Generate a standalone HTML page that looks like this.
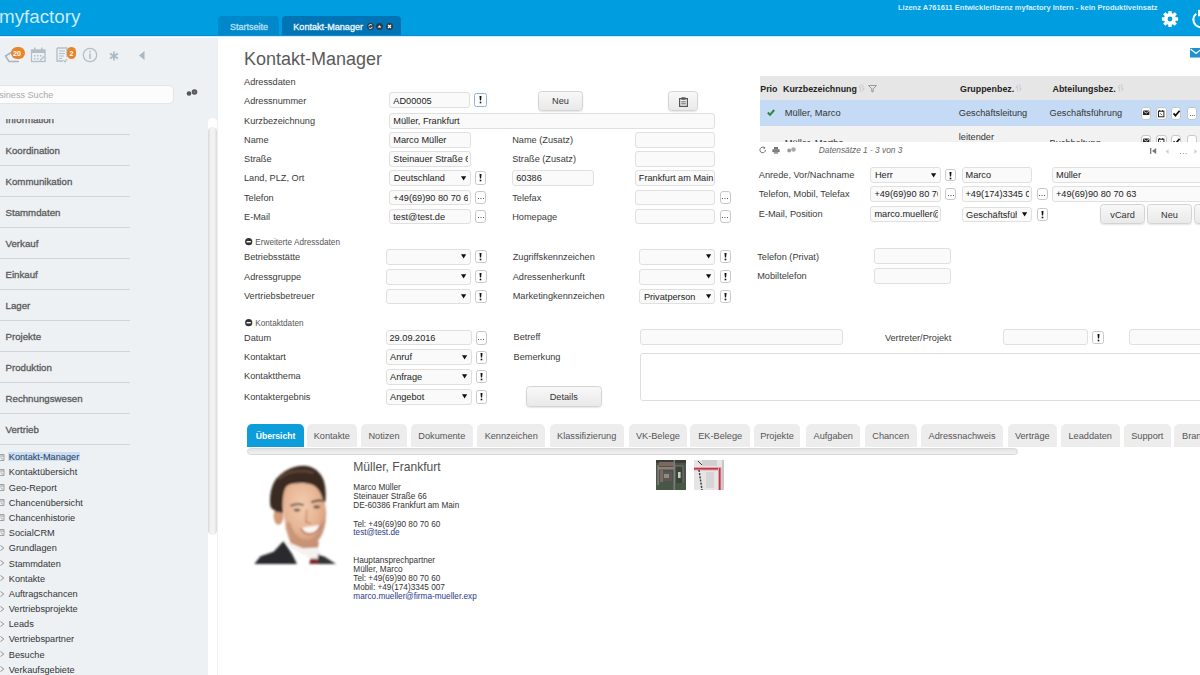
<!DOCTYPE html>
<html><head><meta charset="utf-8"><style>
html,body{margin:0;padding:0;}
body{width:1200px;height:675px;overflow:hidden;position:relative;background:#fff;font-family:"Liberation Sans",sans-serif;}
.t{position:absolute;line-height:0;white-space:nowrap;}
.b{position:absolute;}
svg.b{overflow:visible;}
</style></head><body>
<div class="b" style="left:0.00px;top:0.00px;width:1200.00px;height:36.00px;background:#009de0;"></div>
<div class="b" style="left:0.00px;top:35.00px;width:1200.00px;height:1.00px;background:#0a8dca;"></div>
<div class="b" style="left:0.00px;top:36.00px;width:1200.00px;height:1.00px;background:#c6f1fc;"></div>
<div class="t" style="left:-1.00px;top:17.29px;font-size:18.8px;color:rgba(235,248,255,0.88);">myfactory</div>
<div class="t" style="left:898.00px;top:7.50px;font-size:7.5px;color:#d7f0fc;font-weight:bold;">Lizenz A761611 Entwicklerlizenz myfactory Intern - kein Produktiveinsatz</div>
<div class="b" style="left:218.00px;top:16.00px;width:61.00px;height:19.00px;background:#0088ca;border-radius:4px 4px 0 0;"></div>
<div class="t" style="left:229.90px;top:27.08px;font-size:9.0px;color:#b5e2f8;-webkit-text-stroke:0.3px #b5e2f8;">Startseite</div>
<div class="b" style="left:282.00px;top:16.00px;width:119.00px;height:19.00px;background:#0074b5;border-radius:4px 4px 0 0;"></div>
<div class="t" style="left:293.30px;top:27.05px;font-size:9.1px;color:#eef9ff;-webkit-text-stroke:0.3px #eef9ff;">Kontakt-Manager</div>
<svg class="b" style="left:366.5px;top:22.5px" width="7" height="7"><circle cx="3.5" cy="3.5" r="3.4" fill="#2a3a48"/><path d="M1.8 3.2a1.8 1.8 0 0 1 3.3-0.8M5.2 3.8a1.8 1.8 0 0 1-3.3 0.8" stroke="#fff" stroke-width="1" fill="none"/></svg>
<svg class="b" style="left:375.7px;top:22.5px" width="7" height="7"><circle cx="3.5" cy="3.5" r="3.4" fill="#2a3a48"/><path d="M1.6 4.6L3.5 2.2L5.4 4.6Z" fill="#fff"/></svg>
<svg class="b" style="left:385.6px;top:22.5px" width="7" height="7"><circle cx="3.5" cy="3.5" r="3.4" fill="#2a3a48"/><path d="M2 2L5 5M5 2L2 5" stroke="#fff" stroke-width="1.2"/></svg>
<svg class="b" style="left:1161px;top:10.2px" width="18" height="18" viewBox="0 0 18 18"><g fill="#fff"><rect x="7.3" y="0.9" width="3.4" height="4" rx="0.5" transform="rotate(0 9 9)"/><rect x="7.3" y="0.9" width="3.4" height="4" rx="0.5" transform="rotate(45 9 9)"/><rect x="7.3" y="0.9" width="3.4" height="4" rx="0.5" transform="rotate(90 9 9)"/><rect x="7.3" y="0.9" width="3.4" height="4" rx="0.5" transform="rotate(135 9 9)"/><rect x="7.3" y="0.9" width="3.4" height="4" rx="0.5" transform="rotate(180 9 9)"/><rect x="7.3" y="0.9" width="3.4" height="4" rx="0.5" transform="rotate(225 9 9)"/><rect x="7.3" y="0.9" width="3.4" height="4" rx="0.5" transform="rotate(270 9 9)"/><rect x="7.3" y="0.9" width="3.4" height="4" rx="0.5" transform="rotate(315 9 9)"/><circle cx="9" cy="9" r="6"/></g><circle cx="9" cy="9" r="2.4" fill="#009de0"/></svg>
<svg class="b" style="left:1190.5px;top:9px" width="20" height="20" viewBox="0 0 20 20"><path d="M5.2 4.8A7.6 7.6 0 1 0 14.8 4.8" stroke="#fff" stroke-width="2.1" fill="none"/><rect x="7" y="0.8" width="5" height="6.5" fill="#fff"/></svg>
<div class="b" style="left:0.00px;top:37.50px;width:218.00px;height:637.50px;background:#edf1f4;"></div>
<svg class="b" style="left:4px;top:46px" width="20" height="18"><path d="M12 3.5L1.5 10L5 15.5H15" stroke="#a9b6c0" stroke-width="1.6" fill="none"/></svg>
<div class="b" style="left:10.5px;top:47.2px;width:14.2px;height:11.8px;border-radius:6px;background:#e8842a;"></div>
<div class="t" style="left:12.90px;top:54.21px;font-size:7.2px;color:#fff;font-weight:bold;">20</div>
<svg class="b" style="left:30px;top:47px" width="17" height="16" viewBox="0 0 17 16"><rect x="1.5" y="3" width="13.5" height="11.5" fill="none" stroke="#b3bec6" stroke-width="1.3"/><rect x="1.5" y="3" width="13.5" height="3" fill="#b3bec6"/><rect x="4" y="0.5" width="1.5" height="3.5" fill="#b3bec6"/><rect x="11" y="0.5" width="1.5" height="3.5" fill="#b3bec6"/><g fill="#b3bec6"><rect x="4" y="8" width="1.5" height="1.5"/><rect x="7" y="8" width="1.5" height="1.5"/><rect x="10" y="8" width="1.5" height="1.5"/><rect x="4" y="11" width="1.5" height="1.5"/><rect x="7" y="11" width="1.5" height="1.5"/></g><path d="M10 13.5L14 9.5" stroke="#b3bec6" stroke-width="1.3"/></svg>
<svg class="b" style="left:56px;top:47px" width="14" height="16" viewBox="0 0 14 16"><path d="M1 1H11V10M1 1V14H7" fill="none" stroke="#b3bec6" stroke-width="1.3"/><g stroke="#b3bec6" stroke-width="1.1"><path d="M3 4H9M3 6.5H9M3 9H8M3 11.5H6"/></g><path d="M7.5 13L9 15L11 12" stroke="#b3bec6" stroke-width="1.2" fill="none"/></svg>
<div class="b" style="left:66.5px;top:47.2px;width:9.8px;height:11.8px;border-radius:5px;background:#e8842a;"></div>
<div class="t" style="left:69.40px;top:54.21px;font-size:7.2px;color:#fff;font-weight:bold;">2</div>
<svg class="b" style="left:82px;top:47px" width="16" height="16" viewBox="0 0 16 16"><circle cx="8" cy="8" r="6.7" fill="none" stroke="#b3bec6" stroke-width="1.3"/><rect x="7.2" y="6.5" width="1.6" height="5.5" fill="#b3bec6"/><rect x="7.2" y="3.8" width="1.6" height="1.6" fill="#b3bec6"/></svg>
<svg class="b" style="left:109px;top:51px" width="10" height="10" viewBox="0 0 10 10"><g stroke="#a9b8c2" stroke-width="1.6"><path d="M5 0.5V9.5M1 2.5L9 7.5M9 2.5L1 7.5"/></g></svg>
<svg class="b" style="left:139px;top:51px" width="6" height="9"><path d="M5.5 0L0 4.5L5.5 9Z" fill="#a9b8c2"/></svg>
<div class="b" style="left:-5.00px;top:85.00px;width:179.00px;height:19.30px;background:#fcfcfc;border:1px solid #e3e6e8;border-radius:5px;box-sizing:border-box;"></div>
<div class="t" style="left:-11.90px;top:95.15px;font-size:9.1px;color:#aaaaaa;">Business Suche</div>
<svg class="b" style="left:186px;top:88px" width="13" height="9"><circle cx="3" cy="5.5" r="2.3" fill="#555"/><circle cx="8.5" cy="4" r="2.8" fill="#555"/><circle cx="8.5" cy="4" r="1.2" fill="#777"/></svg>
<div class="b" style="left:0;top:117.5px;width:206px;height:557.5px;overflow:hidden;">
<div class="t" style="left:5.50px;top:2.34px;font-size:9.7px;color:#5a5a5a;-webkit-text-stroke:0.3px #5a5a5a;">Information</div>
<div class="b" style="left:0.00px;top:16.50px;width:130.00px;height:1.00px;background:#cfd5d9;"></div>
<div class="t" style="left:5.50px;top:33.34px;font-size:9.7px;color:#5a5a5a;-webkit-text-stroke:0.3px #5a5a5a;">Koordination</div>
<div class="b" style="left:0.00px;top:47.50px;width:130.00px;height:1.00px;background:#cfd5d9;"></div>
<div class="t" style="left:5.50px;top:64.34px;font-size:9.7px;color:#5a5a5a;-webkit-text-stroke:0.3px #5a5a5a;">Kommunikation</div>
<div class="b" style="left:0.00px;top:78.50px;width:130.00px;height:1.00px;background:#cfd5d9;"></div>
<div class="t" style="left:5.50px;top:95.34px;font-size:9.7px;color:#5a5a5a;-webkit-text-stroke:0.3px #5a5a5a;">Stammdaten</div>
<div class="b" style="left:0.00px;top:109.50px;width:130.00px;height:1.00px;background:#cfd5d9;"></div>
<div class="t" style="left:5.50px;top:126.34px;font-size:9.7px;color:#5a5a5a;-webkit-text-stroke:0.3px #5a5a5a;">Verkauf</div>
<div class="b" style="left:0.00px;top:140.50px;width:130.00px;height:1.00px;background:#cfd5d9;"></div>
<div class="t" style="left:5.50px;top:157.34px;font-size:9.7px;color:#5a5a5a;-webkit-text-stroke:0.3px #5a5a5a;">Einkauf</div>
<div class="b" style="left:0.00px;top:171.50px;width:130.00px;height:1.00px;background:#cfd5d9;"></div>
<div class="t" style="left:5.50px;top:188.34px;font-size:9.7px;color:#5a5a5a;-webkit-text-stroke:0.3px #5a5a5a;">Lager</div>
<div class="b" style="left:0.00px;top:202.50px;width:130.00px;height:1.00px;background:#cfd5d9;"></div>
<div class="t" style="left:5.50px;top:219.34px;font-size:9.7px;color:#5a5a5a;-webkit-text-stroke:0.3px #5a5a5a;">Projekte</div>
<div class="b" style="left:0.00px;top:233.50px;width:130.00px;height:1.00px;background:#cfd5d9;"></div>
<div class="t" style="left:5.50px;top:250.34px;font-size:9.7px;color:#5a5a5a;-webkit-text-stroke:0.3px #5a5a5a;">Produktion</div>
<div class="b" style="left:0.00px;top:264.50px;width:130.00px;height:1.00px;background:#cfd5d9;"></div>
<div class="t" style="left:5.50px;top:281.34px;font-size:9.7px;color:#5a5a5a;-webkit-text-stroke:0.3px #5a5a5a;">Rechnungswesen</div>
<div class="b" style="left:0.00px;top:295.50px;width:130.00px;height:1.00px;background:#cfd5d9;"></div>
<div class="t" style="left:5.50px;top:312.34px;font-size:9.7px;color:#5a5a5a;-webkit-text-stroke:0.3px #5a5a5a;">Vertrieb</div>
<div class="b" style="left:0.00px;top:326.50px;width:130.00px;height:1.00px;background:#cfd5d9;"></div>
<div class="b" style="left:8.30px;top:334.20px;width:71.50px;height:9.70px;background:#c9ddf3;"></div>
<div class="t" style="left:8.75px;top:339.81px;font-size:9.2px;color:#2b3a55;">Kontakt-Manager</div>
<svg class="b" style="left:-1px;top:336.00px" width="6" height="7"><path d="M0 0.5H5V6.5H0" fill="none" stroke="#999" stroke-width="0.9"/><path d="M0 2H5" stroke="#999" stroke-width="0.9"/><path d="M2 3.5L3.8 5.5" stroke="#888" stroke-width="0.9"/></svg>
<div class="t" style="left:8.75px;top:354.98px;font-size:9.2px;color:#333;">Kontaktübersicht</div>
<svg class="b" style="left:-1px;top:351.17px" width="6" height="7"><path d="M0 0.5H5V6.5H0" fill="none" stroke="#999" stroke-width="0.9"/><path d="M0 2H5" stroke="#999" stroke-width="0.9"/><path d="M2 3.5L3.8 5.5" stroke="#888" stroke-width="0.9"/></svg>
<div class="t" style="left:8.75px;top:370.15px;font-size:9.2px;color:#333;">Geo-Report</div>
<svg class="b" style="left:-1px;top:366.34px" width="6" height="7"><path d="M0 0.5H5V6.5H0" fill="none" stroke="#999" stroke-width="0.9"/><path d="M0 2H5" stroke="#999" stroke-width="0.9"/><path d="M2 3.5L3.8 5.5" stroke="#888" stroke-width="0.9"/></svg>
<div class="t" style="left:8.75px;top:385.32px;font-size:9.2px;color:#333;">Chancenübersicht</div>
<svg class="b" style="left:-1px;top:381.51px" width="6" height="7"><path d="M0 0.5H5V6.5H0" fill="none" stroke="#999" stroke-width="0.9"/><path d="M0 2H5" stroke="#999" stroke-width="0.9"/><path d="M2 3.5L3.8 5.5" stroke="#888" stroke-width="0.9"/></svg>
<div class="t" style="left:8.75px;top:400.49px;font-size:9.2px;color:#333;">Chancenhistorie</div>
<svg class="b" style="left:-1px;top:396.68px" width="6" height="7"><path d="M0 0.5H5V6.5H0" fill="none" stroke="#999" stroke-width="0.9"/><path d="M0 2H5" stroke="#999" stroke-width="0.9"/><path d="M2 3.5L3.8 5.5" stroke="#888" stroke-width="0.9"/></svg>
<div class="t" style="left:8.75px;top:415.66px;font-size:9.2px;color:#333;">SocialCRM</div>
<svg class="b" style="left:-1px;top:411.85px" width="6" height="7"><path d="M0 0.5H5V6.5H0" fill="none" stroke="#999" stroke-width="0.9"/><path d="M0 2H5" stroke="#999" stroke-width="0.9"/><path d="M2 3.5L3.8 5.5" stroke="#888" stroke-width="0.9"/></svg>
<div class="t" style="left:8.75px;top:430.83px;font-size:9.2px;color:#333;">Grundlagen</div>
<svg class="b" style="left:-0.5px;top:427.52px" width="5" height="6"><path d="M0.5 0.5L3.8 3L0.5 5.5" fill="none" stroke="#888" stroke-width="0.9"/></svg>
<div class="t" style="left:8.75px;top:446.00px;font-size:9.2px;color:#333;">Stammdaten</div>
<svg class="b" style="left:-0.5px;top:442.69px" width="5" height="6"><path d="M0.5 0.5L3.8 3L0.5 5.5" fill="none" stroke="#888" stroke-width="0.9"/></svg>
<div class="t" style="left:8.75px;top:461.17px;font-size:9.2px;color:#333;">Kontakte</div>
<svg class="b" style="left:-0.5px;top:457.86px" width="5" height="6"><path d="M0.5 0.5L3.8 3L0.5 5.5" fill="none" stroke="#888" stroke-width="0.9"/></svg>
<div class="t" style="left:8.75px;top:476.34px;font-size:9.2px;color:#333;">Auftragschancen</div>
<svg class="b" style="left:-0.5px;top:473.03px" width="5" height="6"><path d="M0.5 0.5L3.8 3L0.5 5.5" fill="none" stroke="#888" stroke-width="0.9"/></svg>
<div class="t" style="left:8.75px;top:491.51px;font-size:9.2px;color:#333;">Vertriebsprojekte</div>
<svg class="b" style="left:-0.5px;top:488.20px" width="5" height="6"><path d="M0.5 0.5L3.8 3L0.5 5.5" fill="none" stroke="#888" stroke-width="0.9"/></svg>
<div class="t" style="left:8.75px;top:506.68px;font-size:9.2px;color:#333;">Leads</div>
<svg class="b" style="left:-0.5px;top:503.37px" width="5" height="6"><path d="M0.5 0.5L3.8 3L0.5 5.5" fill="none" stroke="#888" stroke-width="0.9"/></svg>
<div class="t" style="left:8.75px;top:521.85px;font-size:9.2px;color:#333;">Vertriebspartner</div>
<svg class="b" style="left:-0.5px;top:518.54px" width="5" height="6"><path d="M0.5 0.5L3.8 3L0.5 5.5" fill="none" stroke="#888" stroke-width="0.9"/></svg>
<div class="t" style="left:8.75px;top:537.02px;font-size:9.2px;color:#333;">Besuche</div>
<svg class="b" style="left:-0.5px;top:533.71px" width="5" height="6"><path d="M0.5 0.5L3.8 3L0.5 5.5" fill="none" stroke="#888" stroke-width="0.9"/></svg>
<div class="t" style="left:8.75px;top:552.19px;font-size:9.2px;color:#333;">Verkaufsgebiete</div>
<svg class="b" style="left:-0.5px;top:548.88px" width="5" height="6"><path d="M0.5 0.5L3.8 3L0.5 5.5" fill="none" stroke="#888" stroke-width="0.9"/></svg>
</div>
<div class="b" style="left:0.00px;top:117.00px;width:206.00px;height:1.70px;background:#edf1f4;"></div>
<div class="b" style="left:207.50px;top:117.50px;width:9.20px;height:557.50px;background:#fff;border-radius:4.5px 4.5px 0 0;"></div>
<div class="b" style="left:207.50px;top:126.80px;width:9.20px;height:408.70px;background:linear-gradient(90deg,#d8d8d8,#f2f2f2 30%,#f2f2f2 70%,#d8d8d8);border-radius:4.6px;"></div>
<div class="t" style="left:244.00px;top:59.26px;font-size:18px;color:#5a5a5a;">Kontakt-Manager</div>
<svg class="b" style="left:1190px;top:47.5px" width="12" height="10"><rect x="0" y="0" width="12" height="9.5" fill="#1e8fd2"/><path d="M0.5 1L6 5.5L11.5 1" stroke="#fff" stroke-width="1.3" fill="none"/></svg>
<div class="t" style="left:244.00px;top:82.01px;font-size:9.2px;color:#3a3a3a;">Adressdaten</div>
<div class="t" style="left:244.00px;top:101.01px;font-size:9.2px;color:#3a3a3a;">Adressnummer</div>
<div class="t" style="left:244.00px;top:120.61px;font-size:9.2px;color:#3a3a3a;">Kurzbezeichnung</div>
<div class="t" style="left:244.00px;top:139.51px;font-size:9.2px;color:#3a3a3a;">Name</div>
<div class="t" style="left:244.00px;top:158.91px;font-size:9.2px;color:#3a3a3a;">Straße</div>
<div class="t" style="left:244.00px;top:178.41px;font-size:9.2px;color:#3a3a3a;">Land, PLZ, Ort</div>
<div class="t" style="left:244.00px;top:197.61px;font-size:9.2px;color:#3a3a3a;">Telefon</div>
<div class="t" style="left:244.00px;top:216.71px;font-size:9.2px;color:#3a3a3a;">E-Mail</div>
<div class="b" style="left:389.30px;top:92.30px;width:81.00px;height:16.20px;border:1px solid #e0e0e0;border-radius:3px;background:#fafafa;box-sizing:border-box;overflow:hidden;"></div>
<div class="b" style="left:390.30px;top:93.30px;width:77.00px;height:14.20px;overflow:hidden;"><div class="t" style="left:3.00px;top:7.22px;font-size:9.2px;color:#222;white-space:nowrap">AD00005</div></div>
<div class="b" style="left:474.20px;top:93.00px;width:12.40px;height:14.00px;border:1.5px solid #8fb0dc;border-radius:2.5px;background:#fff;box-sizing:border-box;"></div>
<svg class="b" style="left:478.90px;top:96.40px" width="3" height="7.5"><path d="M0.5 0H2.5L2.1 4.6H0.9Z" fill="#111"/><rect x="0.7" y="5.7" width="1.6" height="1.6" fill="#111"/></svg>
<div class="b" style="left:538.30px;top:90.50px;width:44.40px;height:20.30px;border:1px solid #d4d4d4;border-radius:3.5px;background:linear-gradient(#f8f8f8,#e9e9e9);box-sizing:border-box;box-shadow:0 1px 1.5px rgba(0,0,0,0.10);"></div>
<div class="b" style="left:538.30px;top:90.50px;width:44.40px;"><div class="t" style="position:relative;text-align:center;top:10.87px;font-size:9.2px;color:#333">Neu</div></div>
<div class="b" style="left:668.30px;top:90.50px;width:29.90px;height:20.30px;border:1px solid #d4d4d4;border-radius:3.5px;background:linear-gradient(#f8f8f8,#e9e9e9);box-sizing:border-box;box-shadow:0 1px 1.5px rgba(0,0,0,0.10);"><svg style="position:absolute;left:10px;top:5px" width="9" height="10"><rect x="0.6" y="1.6" width="7.8" height="7.8" fill="none" stroke="#555" stroke-width="1.2"/><rect x="2.5" y="0.3" width="4" height="2.5" fill="#555"/><path d="M2.2 4.8H6.8M2.2 6.8H6.8" stroke="#555" stroke-width="0.9"/></svg></div>
<div class="b" style="left:389.30px;top:113.20px;width:326.20px;height:15.60px;border:1px solid #e0e0e0;border-radius:3px;background:#fafafa;box-sizing:border-box;overflow:hidden;"></div>
<div class="b" style="left:390.30px;top:114.20px;width:322.20px;height:13.60px;overflow:hidden;"><div class="t" style="left:3.00px;top:6.92px;font-size:9.2px;color:#222;white-space:nowrap">Müller, Frankfurt</div></div>
<div class="b" style="left:389.30px;top:132.30px;width:81.40px;height:15.70px;border:1px solid #e0e0e0;border-radius:3px;background:#fafafa;box-sizing:border-box;overflow:hidden;"></div>
<div class="b" style="left:390.30px;top:133.30px;width:77.40px;height:13.70px;overflow:hidden;"><div class="t" style="left:3.00px;top:6.97px;font-size:9.2px;color:#222;white-space:nowrap">Marco Müller</div></div>
<div class="b" style="left:389.30px;top:151.20px;width:81.40px;height:15.80px;border:1px solid #e0e0e0;border-radius:3px;background:#fafafa;box-sizing:border-box;overflow:hidden;"></div>
<div class="b" style="left:390.30px;top:152.20px;width:77.40px;height:13.80px;overflow:hidden;"><div class="t" style="left:3.00px;top:7.02px;font-size:9.2px;color:#222;white-space:nowrap">Steinauer Straße 66</div></div>
<div class="b" style="left:389.30px;top:170.30px;width:81.40px;height:15.80px;border:1px solid #e0e0e0;border-radius:3px;background:#fafafa;box-sizing:border-box;"></div>
<div class="b" style="left:390.30px;top:171.30px;width:65.40px;height:13.80px;overflow:hidden;"><div class="t" style="left:3.5px;top:7.02px;font-size:9.2px;color:#222;white-space:nowrap">Deutschland</div></div>
<svg class="b" style="left:460.80px;top:175.90px" width="5.2" height="4.6"><path d="M0 0.2H5.2L2.6 4.4Z" fill="#111"/></svg>
<div class="b" style="left:474.80px;top:171.30px;width:11.70px;height:13.30px;border:1px solid #c8c8c8;border-radius:2.5px;background:#fff;box-sizing:border-box;"></div>
<svg class="b" style="left:479.15px;top:174.35px" width="3" height="7.5"><path d="M0.5 0H2.5L2.1 4.6H0.9Z" fill="#111"/><rect x="0.7" y="5.7" width="1.6" height="1.6" fill="#111"/></svg>
<div class="b" style="left:389.30px;top:189.70px;width:81.40px;height:15.60px;border:1px solid #e0e0e0;border-radius:3px;background:#fafafa;box-sizing:border-box;overflow:hidden;"></div>
<div class="b" style="left:390.30px;top:190.70px;width:77.40px;height:13.60px;overflow:hidden;"><div class="t" style="left:3.00px;top:6.92px;font-size:9.2px;color:#222;white-space:nowrap">+49(69)90 80 70 60</div></div>
<div class="b" style="left:474.80px;top:190.50px;width:11.70px;height:13.50px;border:1px solid #c8c8c8;border-radius:3px;background:#fff;box-sizing:border-box;"></div>
<svg class="b" style="left:477.65px;top:198.25px" width="6" height="2"><rect x="0" y="0" width="1" height="1" fill="#555"/><rect x="2.5" y="0" width="1" height="1" fill="#555"/><rect x="5" y="0" width="1" height="1" fill="#555"/></svg>
<div class="b" style="left:389.30px;top:208.60px;width:81.40px;height:15.80px;border:1px solid #e0e0e0;border-radius:3px;background:#fafafa;box-sizing:border-box;overflow:hidden;"></div>
<div class="b" style="left:390.30px;top:209.60px;width:77.40px;height:13.80px;overflow:hidden;"><div class="t" style="left:3.00px;top:7.02px;font-size:9.2px;color:#222;white-space:nowrap">test@test.de</div></div>
<div class="b" style="left:474.80px;top:209.50px;width:11.70px;height:13.50px;border:1px solid #c8c8c8;border-radius:3px;background:#fff;box-sizing:border-box;"></div>
<svg class="b" style="left:477.65px;top:217.25px" width="6" height="2"><rect x="0" y="0" width="1" height="1" fill="#555"/><rect x="2.5" y="0" width="1" height="1" fill="#555"/><rect x="5" y="0" width="1" height="1" fill="#555"/></svg>
<div class="t" style="left:512.20px;top:139.71px;font-size:9.2px;color:#3a3a3a;">Name (Zusatz)</div>
<div class="t" style="left:512.20px;top:159.11px;font-size:9.2px;color:#3a3a3a;">Straße (Zusatz)</div>
<div class="t" style="left:512.20px;top:197.61px;font-size:9.2px;color:#3a3a3a;">Telefax</div>
<div class="t" style="left:512.20px;top:216.71px;font-size:9.2px;color:#3a3a3a;">Homepage</div>
<div class="b" style="left:635.20px;top:132.30px;width:80.30px;height:15.70px;border:1px solid #e0e0e0;border-radius:3px;background:#fafafa;box-sizing:border-box;overflow:hidden;"></div>
<div class="b" style="left:635.20px;top:151.20px;width:80.30px;height:15.80px;border:1px solid #e0e0e0;border-radius:3px;background:#fafafa;box-sizing:border-box;overflow:hidden;"></div>
<div class="b" style="left:512.20px;top:170.30px;width:81.40px;height:15.80px;border:1px solid #e0e0e0;border-radius:3px;background:#fafafa;box-sizing:border-box;overflow:hidden;"></div>
<div class="b" style="left:513.20px;top:171.30px;width:77.40px;height:13.80px;overflow:hidden;"><div class="t" style="left:3.00px;top:7.02px;font-size:9.2px;color:#222;white-space:nowrap">60386</div></div>
<div class="b" style="left:635.20px;top:170.30px;width:80.30px;height:15.80px;border:1px solid #e0e0e0;border-radius:3px;background:#fafafa;box-sizing:border-box;overflow:hidden;"></div>
<div class="b" style="left:636.20px;top:171.30px;width:79.30px;height:13.80px;overflow:hidden;"><div class="t" style="left:2.60px;top:7.02px;font-size:9.2px;color:#222;white-space:nowrap">Frankfurt am Main</div></div>
<div class="b" style="left:635.20px;top:189.70px;width:80.30px;height:15.60px;border:1px solid #e0e0e0;border-radius:3px;background:#fafafa;box-sizing:border-box;overflow:hidden;"></div>
<div class="b" style="left:719.60px;top:190.50px;width:11.20px;height:13.50px;border:1px solid #c8c8c8;border-radius:3px;background:#fff;box-sizing:border-box;"></div>
<svg class="b" style="left:722.20px;top:198.25px" width="6" height="2"><rect x="0" y="0" width="1" height="1" fill="#555"/><rect x="2.5" y="0" width="1" height="1" fill="#555"/><rect x="5" y="0" width="1" height="1" fill="#555"/></svg>
<div class="b" style="left:635.20px;top:208.60px;width:80.30px;height:15.80px;border:1px solid #e0e0e0;border-radius:3px;background:#fafafa;box-sizing:border-box;overflow:hidden;"></div>
<div class="b" style="left:719.60px;top:209.50px;width:11.20px;height:13.50px;border:1px solid #c8c8c8;border-radius:3px;background:#fff;box-sizing:border-box;"></div>
<svg class="b" style="left:722.20px;top:217.25px" width="6" height="2"><rect x="0" y="0" width="1" height="1" fill="#555"/><rect x="2.5" y="0" width="1" height="1" fill="#555"/><rect x="5" y="0" width="1" height="1" fill="#555"/></svg>
<svg class="b" style="left:245.30px;top:238.10px" width="7.4" height="7.4"><circle cx="3.7" cy="3.7" r="3.6" fill="#333"/><rect x="1.6" y="3" width="4.2" height="1.4" fill="#fff"/></svg>
<div class="t" style="left:255.30px;top:243.46px;font-size:8.2px;color:#555;">Erweiterte Adressdaten</div>
<div class="t" style="left:244.00px;top:256.61px;font-size:9.2px;color:#3a3a3a;">Betriebsstätte</div>
<div class="t" style="left:244.00px;top:276.71px;font-size:9.2px;color:#3a3a3a;">Adressgruppe</div>
<div class="t" style="left:244.00px;top:296.11px;font-size:9.2px;color:#3a3a3a;">Vertriebsbetreuer</div>
<div class="b" style="left:385.50px;top:248.70px;width:85.20px;height:16.00px;border:1px solid #e0e0e0;border-radius:3px;background:#fafafa;box-sizing:border-box;"></div>
<svg class="b" style="left:460.80px;top:254.40px" width="5.2" height="4.6"><path d="M0 0.2H5.2L2.6 4.4Z" fill="#111"/></svg>
<div class="b" style="left:474.90px;top:249.90px;width:11.80px;height:13.60px;border:1px solid #c8c8c8;border-radius:2.5px;background:#fff;box-sizing:border-box;"></div>
<svg class="b" style="left:479.30px;top:253.10px" width="3" height="7.5"><path d="M0.5 0H2.5L2.1 4.6H0.9Z" fill="#111"/><rect x="0.7" y="5.7" width="1.6" height="1.6" fill="#111"/></svg>
<div class="b" style="left:385.50px;top:268.70px;width:85.20px;height:16.00px;border:1px solid #e0e0e0;border-radius:3px;background:#fafafa;box-sizing:border-box;"></div>
<svg class="b" style="left:460.80px;top:274.40px" width="5.2" height="4.6"><path d="M0 0.2H5.2L2.6 4.4Z" fill="#111"/></svg>
<div class="b" style="left:474.90px;top:269.90px;width:11.80px;height:13.60px;border:1px solid #c8c8c8;border-radius:2.5px;background:#fff;box-sizing:border-box;"></div>
<svg class="b" style="left:479.30px;top:273.10px" width="3" height="7.5"><path d="M0.5 0H2.5L2.1 4.6H0.9Z" fill="#111"/><rect x="0.7" y="5.7" width="1.6" height="1.6" fill="#111"/></svg>
<div class="b" style="left:385.50px;top:288.70px;width:85.20px;height:15.50px;border:1px solid #e0e0e0;border-radius:3px;background:#fafafa;box-sizing:border-box;"></div>
<svg class="b" style="left:460.80px;top:294.15px" width="5.2" height="4.6"><path d="M0 0.2H5.2L2.6 4.4Z" fill="#111"/></svg>
<div class="b" style="left:474.90px;top:289.90px;width:11.80px;height:13.10px;border:1px solid #c8c8c8;border-radius:2.5px;background:#fff;box-sizing:border-box;"></div>
<svg class="b" style="left:479.30px;top:292.85px" width="3" height="7.5"><path d="M0.5 0H2.5L2.1 4.6H0.9Z" fill="#111"/><rect x="0.7" y="5.7" width="1.6" height="1.6" fill="#111"/></svg>
<div class="t" style="left:512.70px;top:256.61px;font-size:9.2px;color:#3a3a3a;">Zugriffskennzeichen</div>
<div class="t" style="left:512.70px;top:276.71px;font-size:9.2px;color:#3a3a3a;">Adressenherkunft</div>
<div class="t" style="left:512.70px;top:296.11px;font-size:9.2px;color:#3a3a3a;">Marketingkennzeichen</div>
<div class="b" style="left:639.40px;top:248.70px;width:76.10px;height:16.00px;border:1px solid #e0e0e0;border-radius:3px;background:#fafafa;box-sizing:border-box;"></div>
<svg class="b" style="left:705.60px;top:254.40px" width="5.2" height="4.6"><path d="M0 0.2H5.2L2.6 4.4Z" fill="#111"/></svg>
<div class="b" style="left:719.50px;top:249.90px;width:11.50px;height:13.60px;border:1px solid #c8c8c8;border-radius:2.5px;background:#fff;box-sizing:border-box;"></div>
<svg class="b" style="left:723.75px;top:253.10px" width="3" height="7.5"><path d="M0.5 0H2.5L2.1 4.6H0.9Z" fill="#111"/><rect x="0.7" y="5.7" width="1.6" height="1.6" fill="#111"/></svg>
<div class="b" style="left:639.40px;top:268.70px;width:76.10px;height:16.00px;border:1px solid #e0e0e0;border-radius:3px;background:#fafafa;box-sizing:border-box;"></div>
<svg class="b" style="left:705.60px;top:274.40px" width="5.2" height="4.6"><path d="M0 0.2H5.2L2.6 4.4Z" fill="#111"/></svg>
<div class="b" style="left:719.50px;top:269.90px;width:11.50px;height:13.60px;border:1px solid #c8c8c8;border-radius:2.5px;background:#fff;box-sizing:border-box;"></div>
<svg class="b" style="left:723.75px;top:273.10px" width="3" height="7.5"><path d="M0.5 0H2.5L2.1 4.6H0.9Z" fill="#111"/><rect x="0.7" y="5.7" width="1.6" height="1.6" fill="#111"/></svg>
<div class="b" style="left:639.40px;top:288.70px;width:76.10px;height:15.50px;border:1px solid #e0e0e0;border-radius:3px;background:#fafafa;box-sizing:border-box;"></div>
<div class="b" style="left:640.40px;top:289.70px;width:60.10px;height:13.50px;overflow:hidden;"><div class="t" style="left:3.5px;top:6.87px;font-size:9.2px;color:#222;white-space:nowrap">Privatperson</div></div>
<svg class="b" style="left:705.60px;top:294.15px" width="5.2" height="4.6"><path d="M0 0.2H5.2L2.6 4.4Z" fill="#111"/></svg>
<div class="b" style="left:719.50px;top:289.90px;width:11.50px;height:13.10px;border:1px solid #c8c8c8;border-radius:2.5px;background:#fff;box-sizing:border-box;"></div>
<svg class="b" style="left:723.75px;top:292.85px" width="3" height="7.5"><path d="M0.5 0H2.5L2.1 4.6H0.9Z" fill="#111"/><rect x="0.7" y="5.7" width="1.6" height="1.6" fill="#111"/></svg>
<div class="t" style="left:757.20px;top:257.21px;font-size:9.2px;color:#3a3a3a;">Telefon (Privat)</div>
<div class="t" style="left:757.20px;top:276.31px;font-size:9.2px;color:#3a3a3a;">Mobiltelefon</div>
<div class="b" style="left:874.20px;top:248.40px;width:76.60px;height:16.10px;border:1px solid #e0e0e0;border-radius:3px;background:#fafafa;box-sizing:border-box;overflow:hidden;"></div>
<div class="b" style="left:874.20px;top:268.30px;width:76.60px;height:15.40px;border:1px solid #e0e0e0;border-radius:3px;background:#fafafa;box-sizing:border-box;overflow:hidden;"></div>
<svg class="b" style="left:245.30px;top:319.10px" width="7.4" height="7.4"><circle cx="3.7" cy="3.7" r="3.6" fill="#333"/><rect x="1.6" y="3" width="4.2" height="1.4" fill="#fff"/></svg>
<div class="t" style="left:255.30px;top:324.26px;font-size:8.2px;color:#555;">Kontaktdaten</div>
<div class="t" style="left:244.00px;top:337.91px;font-size:9.2px;color:#3a3a3a;">Datum</div>
<div class="t" style="left:244.00px;top:356.71px;font-size:9.2px;color:#3a3a3a;">Kontaktart</div>
<div class="t" style="left:244.00px;top:376.21px;font-size:9.2px;color:#3a3a3a;">Kontaktthema</div>
<div class="t" style="left:244.00px;top:396.71px;font-size:9.2px;color:#3a3a3a;">Kontaktergebnis</div>
<div class="b" style="left:385.50px;top:330.00px;width:86.00px;height:15.30px;border:1px solid #e0e0e0;border-radius:3px;background:#fafafa;box-sizing:border-box;overflow:hidden;"></div>
<div class="b" style="left:386.50px;top:331.00px;width:82.00px;height:13.30px;overflow:hidden;"><div class="t" style="left:3.00px;top:6.77px;font-size:9.2px;color:#222;white-space:nowrap">29.09.2016</div></div>
<div class="b" style="left:476.00px;top:331.00px;width:10.70px;height:13.50px;border:1px solid #c8c8c8;border-radius:3px;background:#fff;box-sizing:border-box;"></div>
<svg class="b" style="left:478.35px;top:338.75px" width="6" height="2"><rect x="0" y="0" width="1" height="1" fill="#555"/><rect x="2.5" y="0" width="1" height="1" fill="#555"/><rect x="5" y="0" width="1" height="1" fill="#555"/></svg>
<div class="b" style="left:385.50px;top:349.30px;width:86.00px;height:15.40px;border:1px solid #e0e0e0;border-radius:3px;background:#fafafa;box-sizing:border-box;"></div>
<div class="b" style="left:386.50px;top:350.30px;width:70.00px;height:13.40px;overflow:hidden;"><div class="t" style="left:3.5px;top:6.82px;font-size:9.2px;color:#222;white-space:nowrap">Anruf</div></div>
<svg class="b" style="left:461.60px;top:354.70px" width="5.2" height="4.6"><path d="M0 0.2H5.2L2.6 4.4Z" fill="#111"/></svg>
<div class="b" style="left:476.00px;top:350.50px;width:10.70px;height:13.00px;border:1px solid #c8c8c8;border-radius:2.5px;background:#fff;box-sizing:border-box;"></div>
<svg class="b" style="left:479.85px;top:353.40px" width="3" height="7.5"><path d="M0.5 0H2.5L2.1 4.6H0.9Z" fill="#111"/><rect x="0.7" y="5.7" width="1.6" height="1.6" fill="#111"/></svg>
<div class="b" style="left:385.50px;top:368.70px;width:86.00px;height:16.00px;border:1px solid #e0e0e0;border-radius:3px;background:#fafafa;box-sizing:border-box;"></div>
<div class="b" style="left:386.50px;top:369.70px;width:70.00px;height:14.00px;overflow:hidden;"><div class="t" style="left:3.5px;top:7.12px;font-size:9.2px;color:#222;white-space:nowrap">Anfrage</div></div>
<svg class="b" style="left:461.60px;top:374.40px" width="5.2" height="4.6"><path d="M0 0.2H5.2L2.6 4.4Z" fill="#111"/></svg>
<div class="b" style="left:476.00px;top:369.90px;width:10.70px;height:13.60px;border:1px solid #c8c8c8;border-radius:2.5px;background:#fff;box-sizing:border-box;"></div>
<svg class="b" style="left:479.85px;top:373.10px" width="3" height="7.5"><path d="M0.5 0H2.5L2.1 4.6H0.9Z" fill="#111"/><rect x="0.7" y="5.7" width="1.6" height="1.6" fill="#111"/></svg>
<div class="b" style="left:385.50px;top:388.75px;width:86.00px;height:16.05px;border:1px solid #e0e0e0;border-radius:3px;background:#fafafa;box-sizing:border-box;"></div>
<div class="b" style="left:386.50px;top:389.75px;width:70.00px;height:14.05px;overflow:hidden;"><div class="t" style="left:3.5px;top:7.15px;font-size:9.2px;color:#222;white-space:nowrap">Angebot</div></div>
<svg class="b" style="left:461.60px;top:394.47px" width="5.2" height="4.6"><path d="M0 0.2H5.2L2.6 4.4Z" fill="#111"/></svg>
<div class="b" style="left:476.00px;top:389.95px;width:10.70px;height:13.65px;border:1px solid #c8c8c8;border-radius:2.5px;background:#fff;box-sizing:border-box;"></div>
<svg class="b" style="left:479.85px;top:393.17px" width="3" height="7.5"><path d="M0.5 0H2.5L2.1 4.6H0.9Z" fill="#111"/><rect x="0.7" y="5.7" width="1.6" height="1.6" fill="#111"/></svg>
<div class="t" style="left:513.50px;top:337.31px;font-size:9.2px;color:#3a3a3a;">Betreff</div>
<div class="t" style="left:513.50px;top:356.71px;font-size:9.2px;color:#3a3a3a;">Bemerkung</div>
<div class="b" style="left:526.00px;top:386.10px;width:75.50px;height:21.30px;border:1px solid #d4d4d4;border-radius:3.5px;background:linear-gradient(#f8f8f8,#e9e9e9);box-sizing:border-box;box-shadow:0 1px 1.5px rgba(0,0,0,0.10);"></div>
<div class="b" style="left:526.00px;top:386.10px;width:75.50px;"><div class="t" style="position:relative;text-align:center;top:11.37px;font-size:9.2px;color:#333">Details</div></div>
<div class="b" style="left:640.20px;top:329.30px;width:203.30px;height:16.00px;border:1px solid #e0e0e0;border-radius:3px;background:#fafafa;box-sizing:border-box;overflow:hidden;"></div>
<div class="b" style="left:640.20px;top:353.30px;width:574.80px;height:47.50px;border:1px solid #dedede;border-radius:3px;background:#fff;box-sizing:border-box;"></div>
<div class="t" style="left:884.90px;top:337.71px;font-size:9.2px;color:#3a3a3a;">Vertreter/Projekt</div>
<div class="b" style="left:1002.60px;top:329.30px;width:85.00px;height:16.00px;border:1px solid #e0e0e0;border-radius:3px;background:#fafafa;box-sizing:border-box;overflow:hidden;"></div>
<div class="b" style="left:1091.90px;top:330.50px;width:12.20px;height:13.70px;border:1px solid #c8c8c8;border-radius:2.5px;background:#fff;box-sizing:border-box;"></div>
<svg class="b" style="left:1096.50px;top:333.75px" width="3" height="7.5"><path d="M0.5 0H2.5L2.1 4.6H0.9Z" fill="#111"/><rect x="0.7" y="5.7" width="1.6" height="1.6" fill="#111"/></svg>
<div class="b" style="left:1129.00px;top:329.30px;width:86.00px;height:16.00px;border:1px solid #e0e0e0;border-radius:3px;background:#fafafa;box-sizing:border-box;overflow:hidden;"></div>
<div class="b" style="left:760.00px;top:75.80px;width:440.00px;height:24.30px;background:#e6e6e6;"></div>
<div class="b" style="left:760.00px;top:100.10px;width:440.00px;height:25.60px;background:#c5dbf5;"></div>
<div class="b" style="left:760.00px;top:125.70px;width:440.00px;height:16.00px;background:#f2f2f2;"></div>
<div class="t" style="left:760.30px;top:88.55px;font-size:8.8px;color:#222;font-weight:bold;">Prio</div>
<div class="t" style="left:783.00px;top:88.52px;font-size:8.9px;color:#222;font-weight:bold;">Kurzbezeichnung</div>
<div class="t" style="left:960.00px;top:88.62px;font-size:8.9px;color:#222;font-weight:bold;">Gruppenbez.</div>
<div class="t" style="left:1052.50px;top:88.62px;font-size:8.9px;color:#222;font-weight:bold;">Abteilungsbez.</div>
<svg class="b" style="left:858px;top:83.8px" width="7" height="8"><path d="M3.2 0.5L1 3.2H2.4V7.5M4 7.5L6.2 4.8H4.8V0.5" fill="none" stroke="#c4c4c4" stroke-width="0.8"/></svg>
<svg class="b" style="left:867.5px;top:85px" width="9" height="8"><path d="M0.5 0.5H8.5L5.2 3.8V6.8H3.8V3.8Z" fill="none" stroke="#888" stroke-width="0.8"/></svg>
<svg class="b" style="left:1015px;top:83.8px" width="7" height="8"><path d="M3.2 0.5L1 3.2H2.4V7.5M4 7.5L6.2 4.8H4.8V0.5" fill="none" stroke="#c4c4c4" stroke-width="0.8"/></svg>
<svg class="b" style="left:1117px;top:83.8px" width="7" height="8"><path d="M3.2 0.5L1 3.2H2.4V7.5M4 7.5L6.2 4.8H4.8V0.5" fill="none" stroke="#c4c4c4" stroke-width="0.8"/></svg>
<svg class="b" style="left:766.5px;top:109px" width="8" height="7"><path d="M0.8 3.5L3 5.8L7.2 1" stroke="#24883a" stroke-width="1.9" fill="none"/></svg>
<div class="t" style="left:784.80px;top:113.18px;font-size:9.3px;color:#333;">Müller, Marco</div>
<div class="t" style="left:958.80px;top:113.21px;font-size:9.2px;color:#333;">Geschäftsleitung</div>
<div class="t" style="left:1049.60px;top:113.21px;font-size:9.2px;color:#333;">Geschäftsführung</div>
<div class="b" style="left:760px;top:125.7px;width:440px;height:16px;overflow:hidden;">
<div class="t" style="left:24.80px;top:17.08px;font-size:9.3px;color:#333;">Müller, Martha</div>
<div class="t" style="left:198.80px;top:11.41px;font-size:9.2px;color:#333;">leitender</div>
<div class="t" style="left:289.60px;top:17.11px;font-size:9.2px;color:#333;">Buchhaltung</div>
</div>
<div class="b" style="left:1140.60px;top:107.00px;width:10.50px;height:12.60px;border:1px solid #c8c8c8;border-radius:3px;background:#fff;box-sizing:border-box;"></div>
<div class="b" style="left:1156.25px;top:107.00px;width:10.50px;height:12.60px;border:1px solid #c8c8c8;border-radius:3px;background:#fff;box-sizing:border-box;"></div>
<div class="b" style="left:1170.80px;top:107.00px;width:10.50px;height:12.60px;border:1px solid #c8c8c8;border-radius:3px;background:#fff;box-sizing:border-box;"></div>
<div class="b" style="left:1186.50px;top:107.00px;width:10.50px;height:12.60px;border:1px solid #c8c8c8;border-radius:3px;background:#fff;box-sizing:border-box;"></div>
<svg class="b" style="left:1142.70px;top:109.8px" width="7" height="7"><rect x="0" y="0.5" width="6.4" height="4.6" rx="0.6" fill="#222"/><path d="M0.6 1.2L3.2 3.2L5.8 1.2" stroke="#fff" stroke-width="0.8" fill="none"/></svg>
<svg class="b" style="left:1158.35px;top:109.8px" width="7" height="7"><rect x="0.5" y="1.2" width="5.4" height="5.6" fill="none" stroke="#222" stroke-width="1"/><rect x="1.2" y="0" width="1" height="1.6" fill="#222"/><rect x="4.2" y="0" width="1" height="1.6" fill="#222"/><path d="M2.3 3.4L4 5.2" stroke="#222" stroke-width="0.8"/></svg>
<svg class="b" style="left:1172.90px;top:109.8px" width="7" height="7"><path d="M0.5 3.4L2.5 5.6L6.6 0.8" stroke="#111" stroke-width="1.7" fill="none"/></svg>
<svg class="b" style="left:1188.60px;top:109.8px" width="7" height="7"><rect x="1" y="5" width="0.9" height="0.9" fill="#555"/><rect x="2.9" y="5" width="0.9" height="0.9" fill="#555"/><rect x="4.8" y="5" width="0.9" height="0.9" fill="#555"/></svg>
<div class="b" style="left:1130px;top:125.7px;width:70px;height:16px;overflow:hidden;">
<div class="b" style="left:10.60px;top:9.80px;width:10.50px;height:12.50px;border:1px solid #c8c8c8;border-radius:3px;background:#fff;box-sizing:border-box;"></div>
<svg class="b" style="left:12.70px;top:12.60px" width="7" height="7"><rect x="0" y="0.5" width="6.4" height="4.6" rx="0.6" fill="#222"/><path d="M0.6 1.2L3.2 3.2L5.8 1.2" stroke="#fff" stroke-width="0.8" fill="none"/></svg>
<div class="b" style="left:26.25px;top:9.80px;width:10.50px;height:12.50px;border:1px solid #c8c8c8;border-radius:3px;background:#fff;box-sizing:border-box;"></div>
<svg class="b" style="left:28.35px;top:12.60px" width="7" height="7"><rect x="0.5" y="1.2" width="5.4" height="5.6" fill="none" stroke="#222" stroke-width="1"/><rect x="1.2" y="0" width="1" height="1.6" fill="#222"/><rect x="4.2" y="0" width="1" height="1.6" fill="#222"/><path d="M2.3 3.4L4 5.2" stroke="#222" stroke-width="0.8"/></svg>
<div class="b" style="left:40.80px;top:9.80px;width:10.50px;height:12.50px;border:1px solid #c8c8c8;border-radius:3px;background:#fff;box-sizing:border-box;"></div>
<svg class="b" style="left:42.90px;top:12.60px" width="7" height="7"><path d="M0.5 3.4L2.5 5.6L6.6 0.8" stroke="#111" stroke-width="1.7" fill="none"/></svg>
<div class="b" style="left:56.50px;top:9.80px;width:10.50px;height:12.50px;border:1px solid #c8c8c8;border-radius:3px;background:#fff;box-sizing:border-box;"></div>
<svg class="b" style="left:58.60px;top:12.60px" width="7" height="7"><rect x="1" y="5" width="0.9" height="0.9" fill="#555"/><rect x="2.9" y="5" width="0.9" height="0.9" fill="#555"/><rect x="4.8" y="5" width="0.9" height="0.9" fill="#555"/></svg>
</div>
<svg class="b" style="left:759px;top:146px" width="8" height="8"><path d="M6.5 4A2.8 2.8 0 1 1 5.5 1.8" stroke="#777" stroke-width="1" fill="none"/><path d="M4.5 0.5L6.5 1.8L4.8 3.4" fill="#777"/></svg>
<svg class="b" style="left:772px;top:146.5px" width="8" height="7"><rect x="2" y="0" width="4" height="2.2" fill="#777"/><rect x="0.3" y="2.2" width="7.4" height="3" rx="0.8" fill="#777"/><rect x="2" y="4.6" width="4" height="2.2" fill="#999"/></svg>
<svg class="b" style="left:787px;top:147px" width="10" height="6"><circle cx="2.2" cy="3.5" r="1.9" fill="#999"/><circle cx="6.5" cy="2.5" r="2.3" fill="#aaa"/></svg>
<div class="t" style="left:818.80px;top:150.22px;font-size:8.3px;color:#666;font-style:italic;">Datensätze 1 - 3 von 3</div>
<svg class="b" style="left:1150px;top:148px" width="7" height="6"><rect x="0" y="0" width="1.3" height="6" fill="#777"/><path d="M6.2 0L2 3L6.2 6Z" fill="#777"/></svg>
<svg class="b" style="left:1165px;top:148.5px" width="4" height="5"><path d="M3.6 0L0.6 2.5L3.6 5Z" fill="#d4d4d4"/></svg>
<svg class="b" style="left:1180px;top:152.5px" width="8" height="2"><rect x="0" y="0" width="1" height="1" fill="#999"/><rect x="2.8" y="0" width="1" height="1" fill="#999"/><rect x="5.6" y="0" width="1" height="1" fill="#999"/></svg>
<svg class="b" style="left:1193.5px;top:148.5px" width="4" height="5"><path d="M0.4 0L3.4 2.5L0.4 5Z" fill="#d4d4d4"/></svg>
<div class="t" style="left:758.75px;top:175.01px;font-size:9.2px;color:#3a3a3a;">Anrede, Vor/Nachname</div>
<div class="t" style="left:758.75px;top:194.31px;font-size:9.2px;color:#3a3a3a;">Telefon, Mobil, Telefax</div>
<div class="t" style="left:758.75px;top:214.01px;font-size:9.2px;color:#3a3a3a;">E-Mail, Position</div>
<div class="b" style="left:870.40px;top:167.30px;width:70.85px;height:15.70px;border:1px solid #e0e0e0;border-radius:3px;background:#fafafa;box-sizing:border-box;"></div>
<div class="b" style="left:871.40px;top:168.30px;width:54.85px;height:13.70px;overflow:hidden;"><div class="t" style="left:3.5px;top:6.97px;font-size:9.2px;color:#222;white-space:nowrap">Herr</div></div>
<svg class="b" style="left:931.35px;top:172.85px" width="5.2" height="4.6"><path d="M0 0.2H5.2L2.6 4.4Z" fill="#111"/></svg>
<div class="b" style="left:945.40px;top:169.40px;width:10.85px;height:12.10px;border:1px solid #c8c8c8;border-radius:2.5px;background:#fff;box-sizing:border-box;"></div>
<svg class="b" style="left:949.33px;top:171.85px" width="3" height="7.5"><path d="M0.5 0H2.5L2.1 4.6H0.9Z" fill="#111"/><rect x="0.7" y="5.7" width="1.6" height="1.6" fill="#111"/></svg>
<div class="b" style="left:961.50px;top:167.30px;width:70.80px;height:15.70px;border:1px solid #e0e0e0;border-radius:3px;background:#fafafa;box-sizing:border-box;overflow:hidden;"></div>
<div class="b" style="left:962.50px;top:168.30px;width:66.80px;height:13.70px;overflow:hidden;"><div class="t" style="left:3.00px;top:6.97px;font-size:9.2px;color:#222;white-space:nowrap">Marco</div></div>
<div class="b" style="left:1052.00px;top:167.30px;width:163.00px;height:15.70px;border:1px solid #e0e0e0;border-radius:3px;background:#fafafa;box-sizing:border-box;overflow:hidden;"></div>
<div class="b" style="left:1053.00px;top:168.30px;width:159.00px;height:13.70px;overflow:hidden;"><div class="t" style="left:3.00px;top:6.97px;font-size:9.2px;color:#222;white-space:nowrap">Müller</div></div>
<div class="b" style="left:870.40px;top:186.40px;width:70.85px;height:15.60px;border:1px solid #e0e0e0;border-radius:3px;background:#fafafa;box-sizing:border-box;overflow:hidden;"></div>
<div class="b" style="left:871.40px;top:187.40px;width:66.85px;height:13.60px;overflow:hidden;"><div class="t" style="left:3.00px;top:6.92px;font-size:9.2px;color:#222;white-space:nowrap">+49(69)90 80 70 60</div></div>
<div class="b" style="left:945.40px;top:188.20px;width:10.85px;height:12.30px;border:1px solid #c8c8c8;border-radius:3px;background:#fff;box-sizing:border-box;"></div>
<svg class="b" style="left:947.83px;top:195.35px" width="6" height="2"><rect x="0" y="0" width="1" height="1" fill="#555"/><rect x="2.5" y="0" width="1" height="1" fill="#555"/><rect x="5" y="0" width="1" height="1" fill="#555"/></svg>
<div class="b" style="left:961.50px;top:186.40px;width:70.80px;height:15.60px;border:1px solid #e0e0e0;border-radius:3px;background:#fafafa;box-sizing:border-box;overflow:hidden;"></div>
<div class="b" style="left:962.50px;top:187.40px;width:66.80px;height:13.60px;overflow:hidden;"><div class="t" style="left:3.00px;top:6.92px;font-size:9.2px;color:#222;white-space:nowrap">+49(174)3345 007</div></div>
<div class="b" style="left:1036.50px;top:188.20px;width:11.00px;height:12.30px;border:1px solid #c8c8c8;border-radius:3px;background:#fff;box-sizing:border-box;"></div>
<svg class="b" style="left:1039.00px;top:195.35px" width="6" height="2"><rect x="0" y="0" width="1" height="1" fill="#555"/><rect x="2.5" y="0" width="1" height="1" fill="#555"/><rect x="5" y="0" width="1" height="1" fill="#555"/></svg>
<div class="b" style="left:1052.00px;top:186.40px;width:163.00px;height:15.60px;border:1px solid #e0e0e0;border-radius:3px;background:#fafafa;box-sizing:border-box;overflow:hidden;"></div>
<div class="b" style="left:1053.00px;top:187.40px;width:159.00px;height:13.60px;overflow:hidden;"><div class="t" style="left:3.00px;top:6.92px;font-size:9.2px;color:#222;white-space:nowrap">+49(69)90 80 70 63</div></div>
<div class="b" style="left:870.40px;top:206.25px;width:70.85px;height:15.75px;border:1px solid #e0e0e0;border-radius:3px;background:#fafafa;box-sizing:border-box;overflow:hidden;"></div>
<div class="b" style="left:871.40px;top:207.25px;width:66.85px;height:13.75px;overflow:hidden;"><div class="t" style="left:3.00px;top:7.00px;font-size:9.2px;color:#222;white-space:nowrap">marco.mueller@firma-mueller.exp</div></div>
<div class="b" style="left:961.50px;top:206.90px;width:70.80px;height:15.60px;border:1px solid #e0e0e0;border-radius:3px;background:#fafafa;box-sizing:border-box;"></div>
<div class="b" style="left:962.50px;top:207.90px;width:54.80px;height:13.60px;overflow:hidden;"><div class="t" style="left:3.5px;top:6.92px;font-size:9.2px;color:#222;white-space:nowrap">Geschäftsführer</div></div>
<svg class="b" style="left:1022.40px;top:212.40px" width="5.2" height="4.6"><path d="M0 0.2H5.2L2.6 4.4Z" fill="#111"/></svg>
<div class="b" style="left:1036.50px;top:208.20px;width:11.00px;height:12.80px;border:1px solid #c8c8c8;border-radius:2.5px;background:#fff;box-sizing:border-box;"></div>
<svg class="b" style="left:1040.50px;top:211.00px" width="3" height="7.5"><path d="M0.5 0H2.5L2.1 4.6H0.9Z" fill="#111"/><rect x="0.7" y="5.7" width="1.6" height="1.6" fill="#111"/></svg>
<div class="b" style="left:1100.40px;top:204.20px;width:44.40px;height:20.00px;border:1px solid #d4d4d4;border-radius:3.5px;background:linear-gradient(#f8f8f8,#e9e9e9);box-sizing:border-box;box-shadow:0 1px 1.5px rgba(0,0,0,0.10);"></div>
<div class="b" style="left:1100.40px;top:204.20px;width:44.40px;"><div class="t" style="position:relative;text-align:center;top:10.72px;font-size:9.2px;color:#333">vCard</div></div>
<div class="b" style="left:1147.30px;top:204.00px;width:44.50px;height:20.20px;border:1px solid #d4d4d4;border-radius:3.5px;background:linear-gradient(#f8f8f8,#e9e9e9);box-sizing:border-box;box-shadow:0 1px 1.5px rgba(0,0,0,0.10);"></div>
<div class="b" style="left:1147.30px;top:204.00px;width:44.50px;"><div class="t" style="position:relative;text-align:center;top:10.82px;font-size:9.2px;color:#333">Neu</div></div>
<div class="b" style="left:1194.20px;top:204.20px;width:45.80px;height:20.00px;border:1px solid #d4d4d4;border-radius:3.5px;background:linear-gradient(#f8f8f8,#e9e9e9);box-sizing:border-box;box-shadow:0 1px 1.5px rgba(0,0,0,0.10);"></div>
<div class="b" style="left:246.80px;top:424.00px;width:57.50px;height:22.80px;background:#0d9ddb;border-radius:5px 5px 0 0;"></div>
<div class="b" style="left:246.80px;top:424px;width:57.50px;"><div class="t" style="position:relative;text-align:center;top:12.12px;font-size:8.6px;font-weight:bold;color:#fff">Übersicht</div></div>
<div class="b" style="left:306.60px;top:424.00px;width:50.40px;height:22.80px;background:#ededed;border-radius:5px 5px 0 0;"></div>
<div class="b" style="left:306.60px;top:424px;width:50.40px;"><div class="t" style="position:relative;text-align:center;top:11.91px;font-size:9.2px;color:#555">Kontakte</div></div>
<div class="b" style="left:361.00px;top:424.00px;width:46.00px;height:22.80px;background:#ededed;border-radius:5px 5px 0 0;"></div>
<div class="b" style="left:361.00px;top:424px;width:46.00px;"><div class="t" style="position:relative;text-align:center;top:11.91px;font-size:9.2px;color:#555">Notizen</div></div>
<div class="b" style="left:410.60px;top:424.00px;width:62.40px;height:22.80px;background:#ededed;border-radius:5px 5px 0 0;"></div>
<div class="b" style="left:410.60px;top:424px;width:62.40px;"><div class="t" style="position:relative;text-align:center;top:11.91px;font-size:9.2px;color:#555">Dokumente</div></div>
<div class="b" style="left:477.00px;top:424.00px;width:68.40px;height:22.80px;background:#ededed;border-radius:5px 5px 0 0;"></div>
<div class="b" style="left:477.00px;top:424px;width:68.40px;"><div class="t" style="position:relative;text-align:center;top:11.91px;font-size:9.2px;color:#555">Kennzeichen</div></div>
<div class="b" style="left:549.60px;top:424.00px;width:74.20px;height:22.80px;background:#ededed;border-radius:5px 5px 0 0;"></div>
<div class="b" style="left:549.60px;top:424px;width:74.20px;"><div class="t" style="position:relative;text-align:center;top:11.91px;font-size:9.2px;color:#555">Klassifizierung</div></div>
<div class="b" style="left:628.80px;top:424.00px;width:58.20px;height:22.80px;background:#ededed;border-radius:5px 5px 0 0;"></div>
<div class="b" style="left:628.80px;top:424px;width:58.20px;"><div class="t" style="position:relative;text-align:center;top:11.91px;font-size:9.2px;color:#555">VK-Belege</div></div>
<div class="b" style="left:690.40px;top:424.00px;width:59.60px;height:22.80px;background:#ededed;border-radius:5px 5px 0 0;"></div>
<div class="b" style="left:690.40px;top:424px;width:59.60px;"><div class="t" style="position:relative;text-align:center;top:11.91px;font-size:9.2px;color:#555">EK-Belege</div></div>
<div class="b" style="left:754.00px;top:424.00px;width:46.00px;height:22.80px;background:#ededed;border-radius:5px 5px 0 0;"></div>
<div class="b" style="left:754.00px;top:424px;width:46.00px;"><div class="t" style="position:relative;text-align:center;top:11.91px;font-size:9.2px;color:#555">Projekte</div></div>
<div class="b" style="left:806.00px;top:424.00px;width:54.40px;height:22.80px;background:#ededed;border-radius:5px 5px 0 0;"></div>
<div class="b" style="left:806.00px;top:424px;width:54.40px;"><div class="t" style="position:relative;text-align:center;top:11.91px;font-size:9.2px;color:#555">Aufgaben</div></div>
<div class="b" style="left:864.60px;top:424.00px;width:52.10px;height:22.80px;background:#ededed;border-radius:5px 5px 0 0;"></div>
<div class="b" style="left:864.60px;top:424px;width:52.10px;"><div class="t" style="position:relative;text-align:center;top:11.91px;font-size:9.2px;color:#555">Chancen</div></div>
<div class="b" style="left:920.80px;top:424.00px;width:82.50px;height:22.80px;background:#ededed;border-radius:5px 5px 0 0;"></div>
<div class="b" style="left:920.80px;top:424px;width:82.50px;"><div class="t" style="position:relative;text-align:center;top:11.91px;font-size:9.2px;color:#555">Adressnachweis</div></div>
<div class="b" style="left:1007.50px;top:424.00px;width:49.50px;height:22.80px;background:#ededed;border-radius:5px 5px 0 0;"></div>
<div class="b" style="left:1007.50px;top:424px;width:49.50px;"><div class="t" style="position:relative;text-align:center;top:11.91px;font-size:9.2px;color:#555">Verträge</div></div>
<div class="b" style="left:1060.80px;top:424.00px;width:58.80px;height:22.80px;background:#ededed;border-radius:5px 5px 0 0;"></div>
<div class="b" style="left:1060.80px;top:424px;width:58.80px;"><div class="t" style="position:relative;text-align:center;top:11.91px;font-size:9.2px;color:#555">Leaddaten</div></div>
<div class="b" style="left:1123.80px;top:424.00px;width:47.00px;height:22.80px;background:#ededed;border-radius:5px 5px 0 0;"></div>
<div class="b" style="left:1123.80px;top:424px;width:47.00px;"><div class="t" style="position:relative;text-align:center;top:11.91px;font-size:9.2px;color:#555">Support</div></div>
<div class="b" style="left:1174.40px;top:424.00px;width:49.50px;height:22.80px;background:#ededed;border-radius:5px 5px 0 0;"></div>
<div class="b" style="left:1174.40px;top:424px;width:49.50px;"><div class="t" style="position:relative;text-align:center;top:11.91px;font-size:9.2px;color:#555">Branche</div></div>
<div class="b" style="left:247.00px;top:448.00px;width:771.00px;height:6.60px;background:linear-gradient(#e4e4e4,#f0f0f0);border:1px solid #d8d8d8;border-radius:3.5px;box-sizing:border-box;"></div>
<div class="t" style="left:353.30px;top:466.71px;font-size:12.1px;color:#505050;">Müller, Frankfurt</div>
<div class="t" style="left:353.30px;top:488.05px;font-size:8.22px;color:#333;">Marco Müller</div>
<div class="t" style="left:353.30px;top:497.25px;font-size:8.22px;color:#333;">Steinauer Straße 66</div>
<div class="t" style="left:353.30px;top:506.25px;font-size:8.22px;color:#333;">DE-60386 Frankfurt am Main</div>
<div class="t" style="left:353.30px;top:524.55px;font-size:8.22px;color:#333;">Tel: +49(69)90 80 70 60</div>
<div class="t" style="left:353.30px;top:533.15px;font-size:8.22px;color:#2a3a8a;">test@test.de</div>
<div class="t" style="left:353.30px;top:560.85px;font-size:8.22px;color:#333;">Hauptansprechpartner</div>
<div class="t" style="left:353.30px;top:569.65px;font-size:8.22px;color:#333;">Müller, Marco</div>
<div class="t" style="left:353.30px;top:578.65px;font-size:8.22px;color:#333;">Tel: +49(69)90 80 70 60</div>
<div class="t" style="left:353.30px;top:587.65px;font-size:8.22px;color:#333;">Mobil: +49(174)3345 007</div>
<div class="t" style="left:353.30px;top:597.05px;font-size:8.22px;color:#2a3a8a;">marco.mueller@firma-mueller.exp</div>
<svg class="b" style="left:252px;top:462px" width="86" height="104" viewBox="0 0 558 675">
<defs><filter id="bl" x="-10%" y="-10%" width="120%" height="120%"><feGaussianBlur stdDeviation="7"/></filter>
<radialGradient id="skin" cx="0.45" cy="0.35" r="0.65"><stop offset="0" stop-color="#f2cdb0"/><stop offset="0.6" stop-color="#e6b493"/><stop offset="1" stop-color="#cf9574"/></radialGradient></defs>
<g filter="url(#bl)">
<path d="M215 420 L250 525 L300 565 L420 605 L435 520 Z" fill="#c8906f"/>
<path d="M200 505 L258 560 L335 600 L385 628 L440 640 L448 600 L425 555 L330 560 Z" fill="#f4f2f0"/>
<path d="M15 662 L55 612 L140 582 L205 512 L262 600 L292 662 Z" fill="#2c2c2d"/>
<path d="M428 598 L472 615 L545 662 L428 662 Z" fill="#343536"/>
<path d="M378 628 L425 628 L432 662 L372 662 Z" fill="#7a2731"/>
<ellipse cx="172" cy="350" rx="32" ry="58" fill="#d39a7a"/>
<path d="M195 200 L230 150 L300 132 L385 138 L440 172 L470 240 L482 330 C478 430 445 520 365 556 C300 556 245 500 218 420 L205 330 Z" fill="url(#skin)"/>
<path d="M222 400 C240 480 290 550 360 556 C440 535 470 455 480 370 L455 390 C440 460 410 500 360 505 C300 505 265 460 245 390 Z" fill="#c59276" opacity="0.9"/>
<path d="M120 290 C110 220 125 150 160 105 C205 55 270 22 335 24 C395 26 440 60 462 110 C478 150 482 210 476 262 L462 255 C452 205 432 172 395 150 C340 130 275 135 230 152 C205 175 195 230 202 330 L160 325 C140 310 125 300 120 290 Z" fill="#3b2a21"/>
<path d="M170 110 C230 60 320 45 400 70" stroke="#5e4536" stroke-width="16" fill="none"/>
<path d="M250 285 Q290 265 335 280" stroke="#5a3d2e" stroke-width="12" fill="none"/>
<path d="M385 262 Q420 245 458 252" stroke="#5a3d2e" stroke-width="12" fill="none"/>
<ellipse cx="292" cy="312" rx="22" ry="9" fill="#5a4840"/>
<ellipse cx="420" cy="292" rx="22" ry="9" fill="#5a4840"/>
<path d="M355 310 L350 390 L385 400" stroke="#c88c70" stroke-width="10" fill="none"/>
<path d="M318 430 C365 420 405 415 445 408 C435 455 395 475 350 462 Z" fill="#fbf7f3"/>
<path d="M318 430 C340 480 420 480 445 408" stroke="#a85a4c" stroke-width="9" fill="none"/>
</g></svg>
<svg class="b" style="left:656px;top:459.8px" width="30" height="30" viewBox="0 0 30 30">
<rect width="30" height="30" fill="#4f534d"/>
<rect x="0" y="0" width="30" height="3" fill="#3a3d3a"/>
<rect x="3" y="2" width="15" height="4" fill="#7d6a5e"/>
<rect x="2" y="7" width="16" height="2.5" fill="#8e8078"/>
<rect x="4" y="10" width="3" height="12" fill="#7a6c62"/>
<rect x="7" y="12" width="9" height="9" fill="#5e5650"/>
<rect x="8" y="14" width="5" height="4" fill="#8f8a84"/>
<rect x="19" y="6" width="8" height="18" fill="#3a4438" stroke="#7f837b" stroke-width="0.8"/>
<rect x="22" y="12" width="2.6" height="6" fill="#c9cbc2"/>
<rect x="0" y="23" width="30" height="7" fill="#485846"/>
<rect x="17.5" y="0" width="1.6" height="30" fill="#7c7f78"/>
<rect x="1.5" y="5" width="1.2" height="20" fill="#8c8d86"/>
</svg>
<svg class="b" style="left:694px;top:459.8px" width="30" height="30" viewBox="0 0 30 30">
<defs><filter id="bl3"><feGaussianBlur stdDeviation="0.5"/></filter></defs>
<rect width="30" height="30" fill="#e6e4e4"/>
<g filter="url(#bl3)">
<rect x="8" y="0" width="15" height="6" fill="#d0d0d0"/>
<rect x="0" y="7" width="26" height="3.5" fill="#e8a0a8"/>
<rect x="0" y="8" width="26" height="1.5" fill="#b83a48"/>
<rect x="24" y="7" width="3.5" height="23" fill="#e8a0a8"/>
<rect x="25" y="8" width="1.5" height="22" fill="#b83a48"/>
<path d="M5 10 L8 30" stroke="#333" stroke-width="1.4" stroke-dasharray="2 1.2"/>
<path d="M4 1 L8 5" stroke="#333" stroke-width="1"/>
<rect x="12" y="12" width="8" height="16" fill="#d6d4d4"/>
<rect x="28" y="0" width="2" height="30" fill="#c8c8c8"/>
</g></svg>
</body></html>
